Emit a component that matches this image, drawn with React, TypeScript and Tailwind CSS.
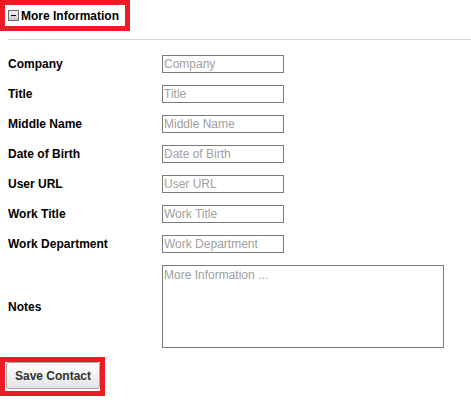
import React from 'react';

const fields = [
  'Company',
  'Title',
  'Middle Name',
  'Date of Birth',
  'User URL',
  'Work Title',
  'Work Department',
];

export default function App() {
  return (
    <div
      className="w-[471px] h-[406px] bg-white text-[12px] text-black"
      style={{ fontFamily: '"Liberation Sans", Arial, sans-serif' }}
    >
      {/* section header */}
      <div className="flex items-center w-[130px] h-[31px] border-[5px] border-[#ed1c24] pl-[3px] bg-white">
        <span className="flex items-center justify-center w-[11px] h-[11px] border border-[#6b6b6b] bg-gradient-to-b from-[#f4f4f4] to-[#c8c8c8]">
          <span className="block w-[5px] h-[1px] bg-black" />
        </span>
        <span className="ml-[2px] font-bold leading-none">More Information</span>
      </div>

      <div className="mt-[8px] ml-[8px] border-t border-[#cfd4d9]" />

      <form className="mt-[15px] pl-[8px] flex flex-col gap-3">
        {fields.map((f) => (
          <div key={f} className="flex items-center">
            <label className="w-[154px] font-bold">{f}</label>
            <input
              type="text"
              placeholder={f}
              className="w-[122px] h-[18px] border border-[#7a7a7a] px-[1px] text-[12px] leading-none placeholder:text-[#a0a0a0] outline-none"
            />
          </div>
        ))}
        <div className="flex items-center">
          <label className="w-[154px] font-bold">Notes</label>
          <textarea
            placeholder="More Information ..."
            className="w-[282px] h-[83px] border border-[#7a7a7a] px-[1px] py-0 text-[12px] resize-none placeholder:text-[#a0a0a0] outline-none"
          />
        </div>
      </form>

      <div className="mt-[9px] w-[105px] h-[39px] border-[5px] border-[#ed1c24] pl-[1px] bg-white">
        <button
          type="button"
          className="w-[94px] h-[27px] rounded-[3px] border border-[#a9a9a9] bg-gradient-to-b from-white to-[#e4e4e4] font-bold text-[12px] text-[#333]"
        >
          Save Contact
        </button>
      </div>
    </div>
  );
}
